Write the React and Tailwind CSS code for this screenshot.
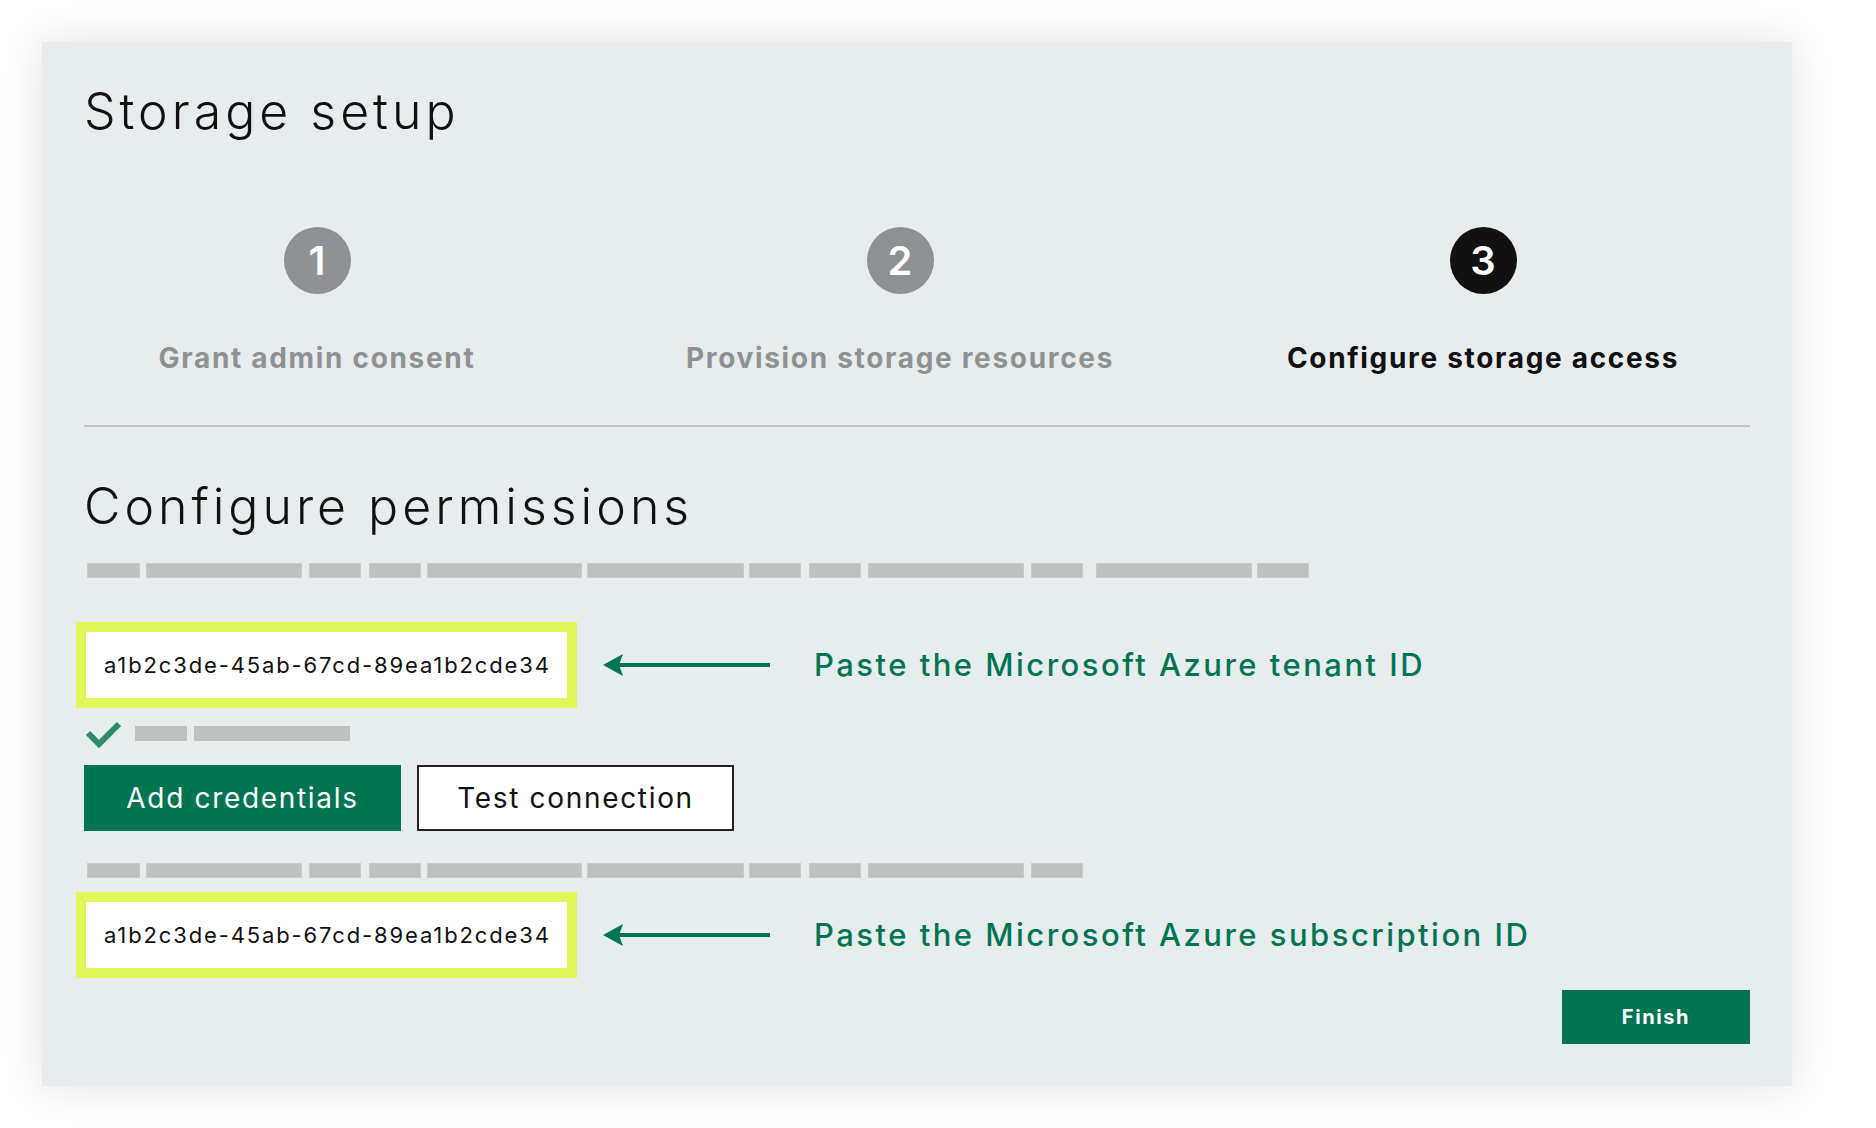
import React from "react";

const font = { fontFamily: "Inter, 'Noto Sans', sans-serif" };

// placeholder bar widths and left gaps (px)
const barsTop = [
  [0, 53], [6, 156], [7, 52], [8, 52], [6, 155], [5, 157],
  [5, 52], [8, 52], [7, 156], [7, 52], [13, 156], [5, 52],
];
const barsBottom = barsTop.slice(0, 10);

const Bars = ({ items }) => (
  <div className="flex h-[15px] pl-[3px]">
    {items.map(([gap, w], i) => (
      <div
        key={i}
        className="h-full bg-[#bfc1c0] border border-[#c9cbca]"
        style={{ width: w, marginLeft: gap }}
      />
    ))}
  </div>
);

const Step = ({ n, label, active }) => (
  <div className="flex flex-col items-center">
    <div
      className={
        "w-[67px] h-[67px] rounded-full flex items-center justify-center text-white text-[40px] font-semibold leading-none " +
        (active ? "bg-[#111111]" : "bg-[#8f9292]")
      }
    >
      {n}
    </div>
    <div
      className={
        "mt-[50px] text-[28px] leading-[28px] font-bold tracking-[0.06em] whitespace-nowrap " +
        (active ? "text-[#111111]" : "text-[#8f9292]")
      }
    >
      {label}
    </div>
  </div>
);

const Arrow = () => (
  <svg width="167" height="24" viewBox="0 0 167 24" className="shrink-0">
    <line x1="14" y1="12" x2="167" y2="12" stroke="#017552" strokeWidth="4" />
    <path d="M0 12 L20 1 L16 12 L20 23 Z" fill="#017552" />
  </svg>
);

const IdRow = ({ label }) => (
  <div className="flex items-center">
    <div className="-ml-[8px] w-[501px] h-[86px] border-[10px] border-[#e0f65a] bg-white flex items-center pl-[18px] text-[22px] tracking-[0.085em] text-[#111111] whitespace-nowrap">
      a1b2c3de-45ab-67cd-89ea1b2cde34
    </div>
    <div className="ml-[26px]">
      <Arrow />
    </div>
    <div className="ml-[44px] text-[31px] font-medium tracking-[0.08em] text-[#017552] whitespace-nowrap">
      {label}
    </div>
  </div>
);

export default function App() {
  return (
    <div className="min-h-screen bg-white pt-[42px] pl-[42px]" style={font}>
      <div className="w-[1750px] h-[1044px] bg-[#e7ecee] shadow-[0_0_40px_rgba(0,0,0,0.12)] px-[42px] pt-[44px] pb-[42px] flex flex-col">
        <h1 className="text-[50px] leading-[50px] font-light tracking-[0.08em] text-[#111111]">Storage setup</h1>

        <div className="mt-[91px] grid grid-cols-[466px_700px_466px]">
          <Step n="1" label="Grant admin consent" />
          <Step n="2" label="Provision storage resources" />
          <Step n="3" label="Configure storage access" active />
        </div>

        <div className="mt-[53px] h-[2px] bg-[#c2c5c4]" />

        <h2 className="mt-[54px] text-[50px] leading-[50px] font-light tracking-[0.08em] text-[#111111]">
          Configure permissions
        </h2>

        <div className="mt-[32px]">
          <Bars items={barsTop} />
        </div>

        <div className="mt-[44px]">
          <IdRow label="Paste the Microsoft Azure tenant ID" />
        </div>

        <div className="mt-[12px] h-[27px] flex items-center">
          <svg width="38" height="28" viewBox="0 0 38 28" className="shrink-0">
            <path d="M4 13 L15 24 L35 4" fill="none" stroke="#2e8a6a" strokeWidth="6" />
          </svg>
          <div className="ml-[13px] flex h-[15px]">
            <div className="w-[52px] h-full bg-[#bfc1c0]" />
            <div className="ml-[7px] w-[156px] h-full bg-[#bfc1c0]" />
          </div>
        </div>

        <div className="mt-[18px] flex">
          <button className="w-[317px] h-[66px] bg-[#017552] text-white text-[28px] tracking-[0.06em] flex items-center justify-center">
            Add credentials
          </button>
          <button className="ml-[16px] w-[317px] h-[66px] bg-white border-2 border-[#222222] text-[#111111] text-[28px] tracking-[0.06em] flex items-center justify-center">
            Test connection
          </button>
        </div>

        <div className="mt-[32px]">
          <Bars items={barsBottom} />
        </div>

        <div className="mt-[14px]">
          <IdRow label="Paste the Microsoft Azure subscription ID" />
        </div>

        <div className="mt-[12px] flex justify-end">
          <button className="w-[188px] h-[54px] bg-[#017552] text-white text-[20px] font-bold tracking-[0.08em]">
            Finish
          </button>
        </div>
      </div>
    </div>
  );
}
